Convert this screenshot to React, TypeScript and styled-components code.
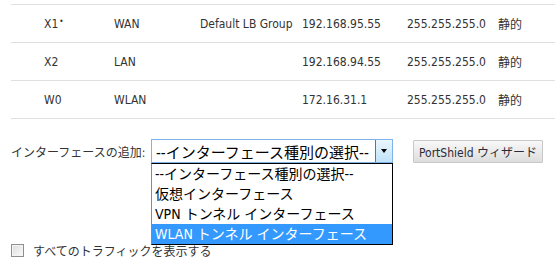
import React from "react";
import styled, { createGlobalStyle } from "styled-components";

const GlobalStyle = createGlobalStyle`
  html, body {
    margin: 0;
    padding: 0;
    background: #ffffff;
  }
  body {
    font-family: "DejaVu Sans Condensed", "Liberation Sans", "Noto Sans CJK JP", sans-serif;
    font-size: 12px;
    color: #333333;
  }
`;

const Page = styled.div`
  width: 555px;
  height: 275px;
  overflow: hidden;
  padding: 4px 0 0 11px;
  box-sizing: border-box;
`;

const Table = styled.div`
  border-top: 1px solid #e0e0e0;
`;

const Row = styled.div`
  display: grid;
  grid-template-columns: 33px 70px 86px 102px 105px 91px 1fr;
  align-items: center;
  height: 38px;
  box-sizing: border-box;
  border-bottom: 1px solid #e0e0e0;
  white-space: nowrap;
`;

const Cell = styled.span`
  font-size: 12px;
  color: #333333;
`;

const Sup = styled.span`
  font-size: 8px;
  vertical-align: 4px;
  margin-left: 1px;
`;

const FormRow = styled.div`
  display: flex;
  align-items: center;
  margin-top: 20px;
  height: 24px;
`;

const Label = styled.span`
  width: 140px;
  white-space: nowrap;
  font-size: 12px;
`;

const SelectWrap = styled.div`
  position: relative;
  width: 242px;
  height: 24px;
`;

const SelectBox = styled.div`
  display: flex;
  align-items: stretch;
  height: 100%;
  box-sizing: border-box;
  border: 1px solid #7eb4ea;
  background: #ffffff;
`;

const SelectText = styled.span`
  flex: 1;
  display: flex;
  align-items: center;
  padding-left: 4px;
  font-size: 15px;
  color: #000000;
  white-space: nowrap;
  overflow: hidden;
`;

const ArrowButton = styled.span`
  width: 16px;
  display: flex;
  align-items: center;
  justify-content: center;
  border-left: 1px solid #3c7fb1;
  background: linear-gradient(#eaf6fd, #bfe4f9);
`;

const Triangle = styled.span`
  width: 0;
  height: 0;
  border-left: 3.5px solid transparent;
  border-right: 3.5px solid transparent;
  border-top: 4px solid #000000;
`;

const OptionList = styled.div`
  position: absolute;
  top: 100%;
  left: 0;
  width: 100%;
  box-sizing: border-box;
  border: 1px solid #000000;
  border-left-color: #8a8a8a;
  background: #ffffff;
  z-index: 2;
`;

const Option = styled.div<{ $selected?: boolean }>`
  height: 20px;
  line-height: 20px;
  padding-left: 3px;
  font-size: 14px;
  white-space: nowrap;
  overflow: hidden;
  color: ${(p) => (p.$selected ? "#ffffff" : "#000000")};
  background: ${(p) => (p.$selected ? "#3399ff" : "transparent")};
`;

const Button = styled.button`
  margin-left: 20px;
  width: 130px;
  height: 23px;
  padding: 0;
  border: 1px solid #c8c8c8;
  border-radius: 1px;
  background: linear-gradient(#f8f8f8, #dddddd);
  font-family: inherit;
  font-size: 12px;
  color: #2a2a3a;
  white-space: nowrap;
`;

const CheckRow = styled.label`
  display: flex;
  align-items: center;
  margin-top: 79px;
  gap: 9px;
  font-size: 12px;
`;

const Checkbox = styled.span`
  width: 13px;
  height: 13px;
  box-sizing: border-box;
  border: 1px solid #8e8f8f;
  background: linear-gradient(135deg, #dcdcdc, #fbfbfb);
  box-shadow: inset 0 0 0 1px #f4f4f4;
`;

const rows = [
  { name: "X1", star: true, zone: "WAN", group: "Default LB Group", ip: "192.168.95.55" },
  { name: "X2", star: false, zone: "LAN", group: "", ip: "192.168.94.55" },
  { name: "W0", star: false, zone: "WLAN", group: "", ip: "172.16.31.1" },
];

const options = [
  "--インターフェース種別の選択--",
  "仮想インターフェース",
  "VPN トンネル インターフェース",
  "WLAN トンネル インターフェース",
];

export default function App() {
  return (
    <>
      <GlobalStyle />
      <Page>
        <Table>
          {rows.map((r) => (
            <Row key={r.name}>
              <span />
              <Cell>
                {r.name}
                {r.star && <Sup>•</Sup>}
              </Cell>
              <Cell>{r.zone}</Cell>
              <Cell>{r.group}</Cell>
              <Cell>{r.ip}</Cell>
              <Cell>255.255.255.0</Cell>
              <Cell>静的</Cell>
            </Row>
          ))}
        </Table>
        <FormRow>
          <Label>インターフェースの追加:</Label>
          <SelectWrap>
            <SelectBox>
              <SelectText>--インターフェース種別の選択--</SelectText>
              <ArrowButton>
                <Triangle />
              </ArrowButton>
            </SelectBox>
            <OptionList>
              {options.map((o, i) => (
                <Option key={o} $selected={i === options.length - 1}>
                  {o}
                </Option>
              ))}
            </OptionList>
          </SelectWrap>
          <Button>PortShield ウィザード</Button>
        </FormRow>
        <CheckRow>
          <Checkbox />
          <span>すべてのトラフィックを表示する</span>
        </CheckRow>
      </Page>
    </>
  );
}
